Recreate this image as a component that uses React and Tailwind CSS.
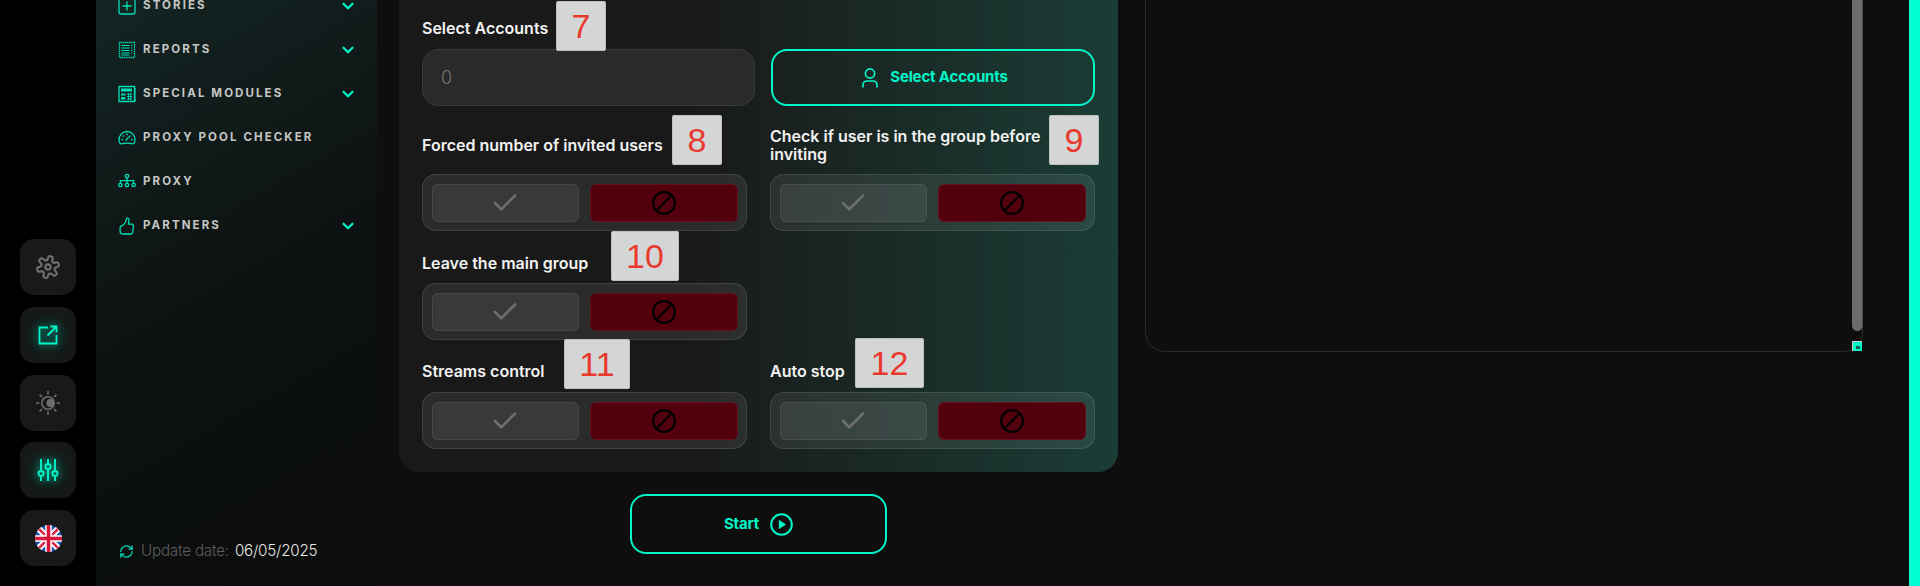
import { ChevronDown, Check, Ban, RefreshCw } from "lucide-react";

const FONT = "font-['Inter','Open_Sans',sans-serif]";

// six soft lobes, like the gear in the rail
const gearPath = () => {
  const pts = [];
  for (let deg = 0; deg < 360; deg += 4) {
    const a = (deg * Math.PI) / 180;
    const r = 8.3 + 1.9 * Math.max(-1, Math.min(1, 1.8 * Math.cos(6 * a + Math.PI / 2)));
    pts.push(`${(12 + r * Math.cos(a)).toFixed(2)} ${(12 + r * Math.sin(a)).toFixed(2)}`);
  }
  return `M${pts.join("L")}Z`;
};

function GearIcon() {
  return (
    <svg width="26" height="26" viewBox="0 0 24 24" fill="none" stroke="#6e6e6e" strokeWidth="2" strokeLinejoin="round">
      <path d={gearPath()} />
      <circle cx="12" cy="12" r="2.4" />
    </svg>
  );
}

function ExternalIcon() {
  return (
    <svg width="20" height="20" viewBox="0 0 20 20" fill="none" stroke="#00f5c8" strokeWidth="1.8" className="drop-shadow-[0_0_4px_#00ffd1a0]">
      <path d="M10 2.5H1.5V18.5H18.5V10" />
      <path d="M9.5 10.5L18 2M12.5 1.5H18.5V7.5" />
    </svg>
  );
}

function ThemeIcon() {
  return (
    <svg width="26" height="26" viewBox="0 0 26 26" fill="none" stroke="#6e6e6e" strokeWidth="1.6">
      <circle cx="13" cy="13" r="6.2" />
      <circle cx="15.3" cy="13" r="3.9" fill="#6e6e6e" stroke="none" />
      <path d="M13 1v3.4M13 21.6V25M1 13h3.4M21.6 13H25M4.6 4.6l2.4 2.4M19 19l2.4 2.4M4.6 21.4L7 19M19 7l2.4-2.4" />
    </svg>
  );
}

function SlidersIcon() {
  return (
    <svg width="22" height="24" viewBox="0 0 22 24" fill="none" stroke="#00f5c8" strokeWidth="1.9" className="drop-shadow-[0_0_4px_#00ffd1c0]">
      <path d="M4 1v11.5M4 19v4M11 1v4.5M11 12v11M18 1v11.5M18 19v4" />
      <circle cx="4" cy="15.5" r="2.5" />
      <circle cx="11" cy="8.5" r="2.5" />
      <circle cx="18" cy="15.5" r="2.5" />
    </svg>
  );
}

function FlagIcon() {
  return (
    <svg width="27" height="27" viewBox="0 0 27 27" className="rounded-full">
      <rect width="27" height="27" fill="#1c55ad" />
      <path d="M0 2L25 27M27 25L2 0M0 25L25 0M27 2L2 27" stroke="#fff" strokeWidth="3.4" />
      <path d="M0 1L26 27M27 26L1 0M0 26L26 0M27 1L1 27" stroke="#d8143a" strokeWidth="1.1" />
      <path d="M13.5 0V27M0 13.5H27" stroke="#fff" strokeWidth="6.6" />
      <path d="M13.5 0V27M0 13.5H27" stroke="#d8143a" strokeWidth="3.6" />
    </svg>
  );
}

const NAV_ICONS = {
  stories: (
    <>
      <rect x="1" y="1" width="16" height="16" rx="1.5" />
      <path d="M9 4.5v9M4.5 9h9" />
    </>
  ),
  reports: (
    <>
      <rect x="1.5" y="1.5" width="15" height="15" strokeDasharray="1.2 0.6" />
      <path d="M3.5 4.5h8M3.5 7h8M3.5 9.5h8M3.5 12h8M3.5 14h8M13 4.5h1.5M13 7h1.5M13 9.5h1.5M13 12h1.5" strokeWidth="1" />
    </>
  ),
  modules: (
    <>
      <path d="M1 1.5h15.5V16.5H1Z" />
      <path d="M16.5 3.5H18V15.5H16.5" strokeWidth="0.9" />
      <path d="M3 3.5h11v3H3Z" fill="#00e0b8" stroke="none" />
      <path d="M3 8.5h4.5v2H3ZM3 12h4.5v2.5H3Z" fill="#00e0b8" stroke="none" />
      <path d="M9 9h5M9 11.5h5M9 14h5M10.5 8v7M12.8 8v7" strokeWidth="0.9" />
    </>
  ),
  gauge: (
    <>
      <path d="M3 15C1.6 14.4 1 13 1 11.2C1 6 4.6 2.5 9 2.5S17 6 17 11.2C17 13 16.4 14.4 15 15C11.5 13.9 6.5 13.9 3 15Z" />
      <path d="M7.5 11.5L12.3 6.6M3.5 10.5h1.6M13 10.5h1.6M5 6.5l1 1M9 4.5v1.7" />
    </>
  ),
  proxy: (
    <>
      <circle cx="9" cy="3" r="1.7" />
      <path d="M9 4.7v3M2.4 10V7.7h13.2V10M9 7.7V10" />
      <circle cx="2.4" cy="12" r="1.7" />
      <circle cx="9" cy="12" r="1.7" />
      <circle cx="15.6" cy="12" r="1.7" />
    </>
  ),
  partners: (
    <>
      <path d="M2.5 9.5C3.5 8.6 5 8.2 6 7.4C7.2 6.2 8 4 8.6 1.6C9.4 0.6 11 1.4 11 2.8C11 4.6 10.4 6 10.4 7.2H13.5C15 7.2 15.5 8 15.4 9L14.8 15C14.7 16.4 14 17 12.8 17H5.5C4 17 2.5 16.5 2.2 15.3C1.9 14 2 11 2.5 9.5Z" />
    </>
  ),
};

const NAV = [
  { icon: "stories", label: "STORIES", more: true },
  { icon: "reports", label: "REPORTS", more: true },
  { icon: "modules", label: "SPECIAL MODULES", more: true },
  { icon: "gauge", label: "PROXY POOL CHECKER" },
  { icon: "proxy", label: "PROXY" },
  { icon: "partners", label: "PARTNERS", more: true },
];

function RailButton({ glow, children }) {
  return (
    <div
      className={`flex h-14 w-14 items-center justify-center rounded-[14px] ${
        glow ? "bg-[radial-gradient(circle,#0e2a25_0%,#151918_60%,#171717_100%)]" : "bg-[#191919]"
      }`}
    >
      {children}
    </div>
  );
}

function Toggle() {
  return (
    <div className="flex h-[57px] items-center gap-[11px] rounded-[14px] border border-white/10 bg-white/8 px-[8.5px]">
      <div className="flex h-[38px] flex-1 items-center justify-center rounded-[6px] border border-white/8 bg-white/7">
        <Check size={30} strokeWidth={2.6} absoluteStrokeWidth className="text-[#6e6e6e]" />
      </div>
      <div className="flex h-[38px] flex-1 items-center justify-center rounded-[6px] border border-[#66101f] bg-[#52000e]">
        <Ban size={26} strokeWidth={2.2} absoluteStrokeWidth className="-scale-x-100 text-black" />
      </div>
    </div>
  );
}

function Badge({ className, children }) {
  return (
    <div
      className={`absolute flex h-[50px] items-center justify-center rounded-[2px] border border-black/10 bg-[#d4d6d6] font-['Liberation_Sans',sans-serif] text-[34px] font-normal leading-none tracking-normal text-[#e8392e] ${className}`}
    >
      {children}
    </div>
  );
}

function Label({ className = "", children }) {
  return <div className={`relative text-[16px] font-semibold leading-[18px] text-[#f2f2f2] ${className}`}>{children}</div>;
}

export default function App() {
  return (
    <div className={`flex h-[586px] w-full overflow-hidden bg-[#0e0e0e] ${FONT}`}>
      <aside className="flex w-24 shrink-0 flex-col items-center justify-end gap-[11.75px] bg-black pb-[20px] pl-[0.5px]">
        <RailButton><GearIcon /></RailButton>
        <RailButton glow><ExternalIcon /></RailButton>
        <RailButton><ThemeIcon /></RailButton>
        <RailButton glow><SlidersIcon /></RailButton>
        <RailButton><FlagIcon /></RailButton>
      </aside>

      <nav className="flex w-[281px] shrink-0 flex-col justify-between bg-[linear-gradient(150deg,#132523_0%,#0d1111_50%,#0b0c0c_100%)] pb-[23px] pl-[22px] pr-[22px]">
        <ul className="-mt-[16px]">
          {NAV.map((item) => (
            <li key={item.label} className="flex h-[44px] items-center">
              <svg width="18" height="18" viewBox="0 0 18 18" fill="none" stroke="#00e0b8" strokeWidth="1.3" className="mr-[7px] shrink-0">
                {NAV_ICONS[item.icon]}
              </svg>
              <span className="text-[11.5px] font-bold tracking-[2.1px] text-[#c6c6c6]">{item.label}</span>
              {item.more && <ChevronDown size={18} strokeWidth={3} className="ml-auto -mr-[2px] text-[#00f5c8]" />}
            </li>
          ))}
        </ul>
        <div className="flex items-center pl-[1px] text-[15.2px] font-light tracking-[-0.2px]">
          <RefreshCw size={15} strokeWidth={2} className="mr-[7px] text-[#00e0b8]" />
          <span className="mr-[6px] text-[#5c5c5c]">Update date:</span>
          <span className="text-[#e8e8e8]">06/05/2025</span>
        </div>
      </nav>

      <main className="ml-[22px] flex w-[719px] shrink-0 flex-col items-center">
        <section className="-mt-[40px] w-full rounded-[20px] bg-[linear-gradient(90deg,#191919_40%,#1a3d35_100%)] px-[23px] pb-[23px] pt-[59px]">
          <div className="flex gap-4">
            <div className="w-[333px]">
              <Label className="mb-[12px]">
                Select Accounts
                <Badge className="left-[134px] -top-[18px] w-[50px]">7</Badge>
              </Label>
              <div className="flex h-[57px] items-center rounded-[16px] border border-[#3a3a3a] bg-[#2a2a2a] pl-[18px] text-[18px] font-light text-[#747474]">
                0
              </div>
            </div>
            <button className="mt-[30px] flex h-[57px] flex-1 items-center justify-center gap-[12px] rounded-[16px] border-2 border-[#00f5c8] pl-[4px] text-[15px] font-bold tracking-[-0.15px] text-[#00f5c8]">
              <svg width="16" height="20" viewBox="0 0 16 20" fill="none" stroke="currentColor" strokeWidth="1.7">
                <circle cx="8" cy="5.5" r="4.6" />
                <path d="M1 19.5V17a4 4 0 0 1 4-4h6a4 4 0 0 1 4 4v2.5" />
              </svg>
              Select Accounts
            </button>
          </div>

          <div className="mt-[21px] grid grid-cols-2 gap-x-[23px]">
            <div>
              <Label className="mb-[11px] flex h-[36px] items-center">
                Forced number of invited users
                <Badge className="left-[250px] -top-[12px] w-[50px]">8</Badge>
              </Label>
              <Toggle />
            </div>
            <div>
              <Label className="mb-[11px] flex h-[36px] w-[280px] items-center">
                Check if user is in the group before inviting
                <Badge className="left-[279px] -top-[12px] w-[50px]">9</Badge>
              </Label>
              <Toggle />
            </div>

            <div className="mt-[23px]">
              <Label className="mb-[11px]">
                Leave the main group
                <Badge className="left-[189px] -top-[23px] w-[68px]">10</Badge>
              </Label>
              <Toggle />
            </div>
            <div />

            <div className="mt-[22px]">
              <Label className="mb-[12px]">
                Streams control
                <Badge className="left-[142px] -top-[23px] w-[66px]">11</Badge>
              </Label>
              <Toggle />
            </div>
            <div className="mt-[22px]">
              <Label className="mb-[12px]">
                Auto stop
                <Badge className="left-[85px] -top-[24px] w-[69px]">12</Badge>
              </Label>
              <Toggle />
            </div>
          </div>
        </section>

        <button className="mt-[22px] flex h-[60px] w-[257px] shrink-0 items-center justify-center gap-[11px] rounded-[16px] border-2 border-[#00f5c8] text-[15px] font-bold tracking-[-0.2px] text-[#00f5c8]">
          Start
          <svg width="23" height="23" viewBox="0 0 23 23" fill="none" stroke="currentColor" strokeWidth="2">
            <circle cx="11.5" cy="11.5" r="10.3" />
            <path d="M8.8 6.8L16 11.5L8.8 16.2Z" fill="currentColor" stroke="none" />
          </svg>
        </button>
      </main>

      <div className="relative ml-[27px] -mt-[40px] h-[392px] w-[718px] shrink-0 rounded-[20px] border border-[#2a2a2a]">
        <div className="absolute -right-px top-0 h-[370px] w-[11px] rounded-b-[6px] border-r border-[#4a4a4a] bg-[#6c6c6c]" />
        <div className="absolute right-0 bottom-0 flex h-[10px] w-[10px] items-end justify-end border-l border-t border-[#cfcfcf] bg-[#00f5c8]">
          <div className="mb-[2px] mr-[2px] h-[3px] w-[4px] bg-[#0e5a4c]" />
        </div>
      </div>

      <div className="ml-auto w-[11px] shrink-0 bg-[#00ffd5]" />
    </div>
  );
}
